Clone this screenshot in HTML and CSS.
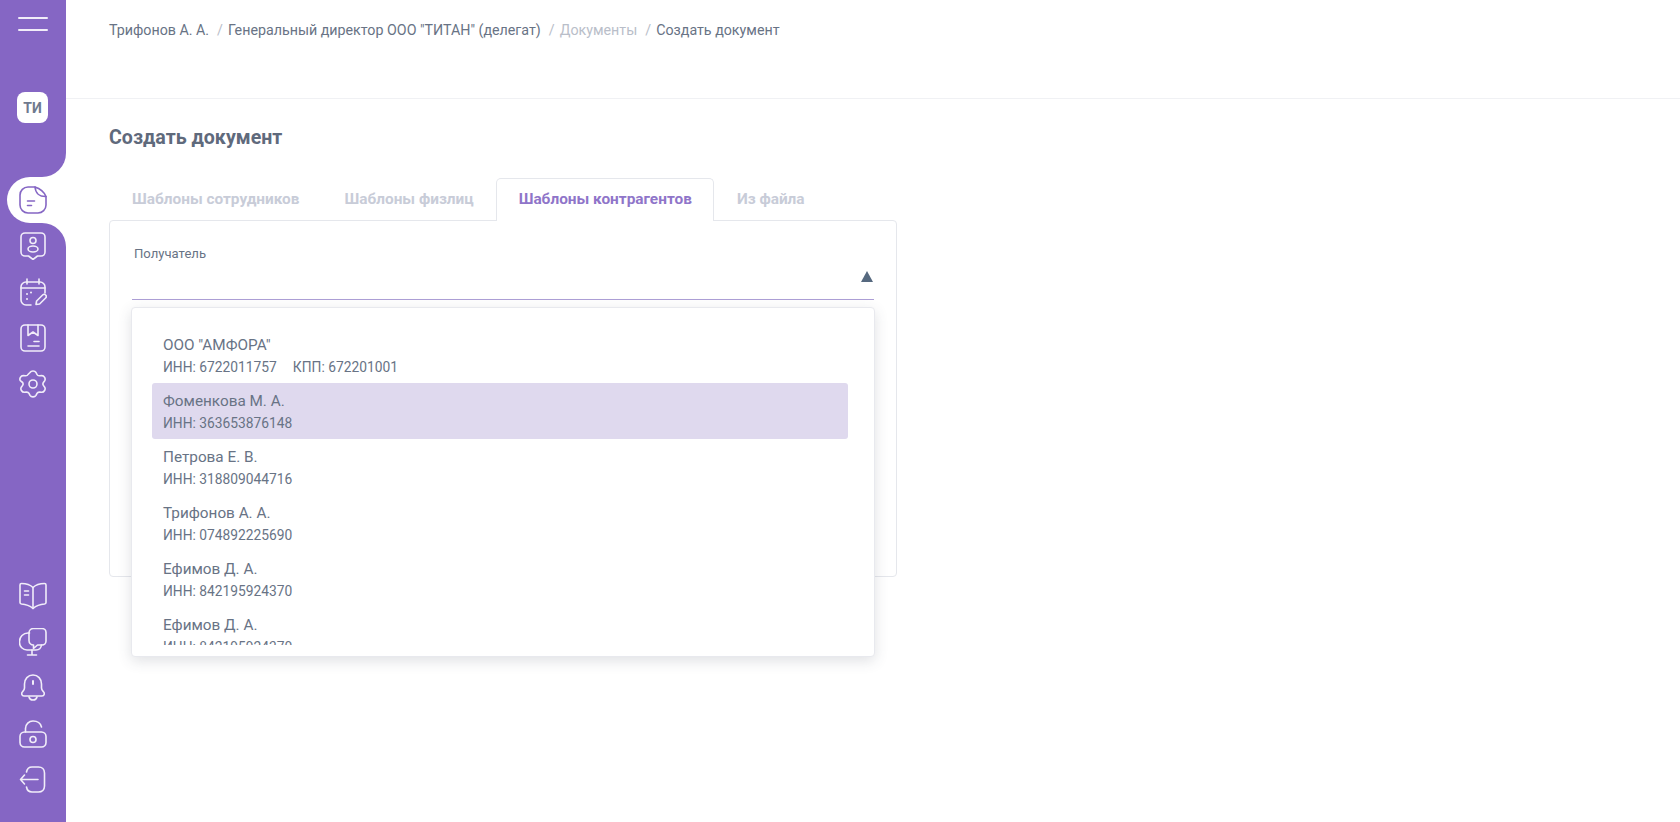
FILE: index.html
```html
<!DOCTYPE html>
<html lang="ru">
<head>
<meta charset="utf-8">
<title>Создать документ</title>
<link rel="stylesheet" href="styles.css">
</head>
<body>
<div class="app">
  <aside class="sidebar">
    <div class="side-top">
      <div class="burger"><span></span><span></span></div>
      <div class="avatar">ТИ</div>
    </div>
    <div class="side-active">
      <div class="pill">
        <svg class="ico ico-active" viewBox="0 0 28 28"><path d="M16 1H9a8 8 0 0 0-8 8v10a8 8 0 0 0 8 8h10a8 8 0 0 0 8-8v-8.500"/><path d="M16 1c.5 6 4.500 9.800 11 9.500C25 6 21 2.500 16 1z"/><path d="M8.500 15h7M8.500 19.500h4"/></svg>
      </div>
    </div>
    <div class="side-rest">
      <div class="icons">
        <svg class="ico" viewBox="0 0 28 28"><path d="M6 1h16a4 4 0 0 1 4 4v15a4 4 0 0 1-4 4h-3.500L14 27.500 9.500 24H6a4 4 0 0 1-4-4V5a4 4 0 0 1 4-4z"/><circle cx="14" cy="8.500" r="3"/><ellipse cx="14" cy="17" rx="5" ry="3"/></svg>
        <svg class="ico" viewBox="0 0 28 28"><path d="M12 27H7a5 5 0 0 1-5-5V9a5 5 0 0 1 5-5h14a5 5 0 0 1 5 5v6"/><path d="M8 1v5M20 1v5M2 10h24"/><path d="M8 16h.01M12 14.500h.01M8 21h.01" stroke-width="2"/><path d="M17 26.500l.6-3.500 6-6a2 2 0 0 1 3 3l-6 6z"/></svg>
        <svg class="ico" viewBox="0 0 28 28"><rect x="2" y="1" width="24" height="26" rx="4"/><path d="M9 1v10.500l5-3.500 5 3.500V1"/><path d="M9 22h11M15 17.500h5"/></svg>
        <svg class="ico" viewBox="0 0 28 28"><circle cx="14" cy="14" r="4"/><path d="M11 2.500c.6-1 1.600-1.500 3-1.500s2.400.5 3 1.500l1 2c.5 1 1.600 1.400 2.600 1.300l2.200-.2c1.200 0 2.100.6 2.800 1.800.7 1.200.7 2.300.1 3.300l-1.300 1.800c-.6.900-.6 2 0 2.900l1.300 1.800c.6 1 .6 2.100-.1 3.300-.7 1.200-1.600 1.800-2.800 1.800l-2.200-.2c-1-.1-2.100.3-2.600 1.300l-1 2c-.6 1-1.600 1.500-3 1.500s-2.400-.5-3-1.500l-1-2c-.5-1-1.600-1.400-2.600-1.300l-2.200.2c-1.200 0-2.100-.6-2.800-1.800-.7-1.200-.7-2.300-.1-3.300l1.300-1.800c.6-.9.6-2 0-2.900L1.300 10.700c-.6-1-.6-2.100.1-3.300C2.100 6.200 3 5.600 4.200 5.600l2.200.2c1 .1 2.100-.3 2.600-1.300z"/></svg>
      </div>
      <div class="icons">
        <svg class="ico" viewBox="0 0 28 28"><path d="M14 5.500C11 2.500 6.500 1.500 2.500 1.500 1.700 1.500 1 2.200 1 3v17.500c0 .8.700 1.400 1.500 1.500 4 .3 8 1.500 11.500 4.500 3.500-3 7.500-4.200 11.500-4.500.8-.1 1.500-.7 1.500-1.500V3c0-.8-.7-1.500-1.500-1.500-4 0-8.500 1-11.500 4z"/><path d="M14 5.500v21M5.500 9h4M5.500 13h4"/></svg>
        <svg class="ico" viewBox="0 0 28 28"><path d="M10.500 5H9a8.500 8.500 0 0 0-8.500 8.500v1a7.500 7.500 0 0 0 7.500 7.500h9c3 0 5-1.500 5.500-5"/><path d="M13 22v5M8.500 27h9"/><path d="M14.500 .5H23a4 4 0 0 1 4 4V13a4 4 0 0 1-4 4h-4.500l-4 3.500V17a4.500 4.500 0 0 1-4.500-4.500V5a4.500 4.500 0 0 1 4.500-4.500z"/></svg>
        <svg class="ico" viewBox="0 0 28 28"><path d="M14 1c-5 0-8.500 4-8.500 9v4c0 1.500-.8 2.700-2 3.800-1.500 1.500-.8 4.200 1.500 4.200h18c2.300 0 3-2.700 1.500-4.200-1.200-1.100-2-2.300-2-3.800v-4c0-5-3.500-9-8.500-9z"/><path d="M10 23c.5 2 2 3 4 3s3.500-1 4-3"/><path d="M14 7v3" stroke-width="2"/></svg>
        <svg class="ico" viewBox="0 0 28 28"><rect x="1" y="12" width="26" height="15" rx="4.500"/><circle cx="14" cy="19.500" r="3"/><path d="M6.500 12V8.500C6.500 4 10 1 14 1c4 0 7.500 2 8.500 6"/></svg>
        <svg class="ico" viewBox="0 0 28 28"><path d="M7.500 6c.5-3 2.500-5 5.500-5h6.500c3.500 0 6 2.500 6 6v13c0 3.500-2.500 6-6 6H13c-3 0-5-2-5.500-5"/><path d="M19 13.500H1.500M5.500 9L1.500 13.500 5.500 18"/></svg>
      </div>
    </div>
  </aside>

  <main class="main">
    <header class="topbar">
      <nav class="crumbs">
        <span class="crumb">Трифонов А. А.</span><span class="sep">/</span>
        <span class="crumb">Генеральный директор ООО "ТИТАН" (делегат)</span><span class="sep">/</span>
        <span class="crumb crumb-muted">Документы</span><span class="sep">/</span>
        <span class="crumb">Создать документ</span>
      </nav>
    </header>
    <section class="content">
      <h1 class="title">Создать документ</h1>
      <div class="tabs">
        <div class="tab">Шаблоны сотрудников</div>
        <div class="tab">Шаблоны физлиц</div>
        <div class="tab tab-active">Шаблоны контрагентов</div>
        <div class="tab">Из файла</div>
      </div>
      <div class="card">
        <div class="field">
          <div class="field-label">Получатель</div>
          <div class="field-input"><span class="arrow"></span></div>
          <div class="dropdown">
            <div class="list">
              <div class="item"><div class="item-name">ООО "АМФОРА"</div><div class="item-sub"><span>ИНН: 6722011757</span><span>КПП: 672201001</span></div></div>
              <div class="item item-selected"><div class="item-name">Фоменкова М. А.</div><div class="item-sub"><span>ИНН: 363653876148</span></div></div>
              <div class="item"><div class="item-name">Петрова Е. В.</div><div class="item-sub"><span>ИНН: 318809044716</span></div></div>
              <div class="item"><div class="item-name">Трифонов А. А.</div><div class="item-sub"><span>ИНН: 074892225690</span></div></div>
              <div class="item"><div class="item-name">Ефимов Д. А.</div><div class="item-sub"><span>ИНН: 842195924370</span></div></div>
              <div class="item"><div class="item-name">Ефимов Д. А.</div><div class="item-sub"><span>ИНН: 842195924370</span></div></div>
            </div>
          </div>
        </div>
      </div>
    </section>
  </main>
</div>
</body>
</html>
```
FILE: styles.css
```css
* { box-sizing: border-box; }
html, body { margin: 0; height: 100%; overflow: hidden; background: #fff; }
body { font-family: Roboto, "Liberation Sans", sans-serif; color: #687385; }
.app { display: flex; height: 822px; }

.sidebar { width: 66px; flex: none; display: flex; flex-direction: column; }
.side-top { height: 177px; background: #8566c4; border-bottom-right-radius: 24px; padding: 17px 0 0 17px; }
.burger { height: 14px; margin-left: 1px; display: flex; flex-direction: column; justify-content: space-between; }
.burger span { display: block; height: 2px; width: 30px; background: #f1edf9; border-radius: 1px; }
.avatar { margin-top: 61px; width: 31px; height: 31px; border-radius: 8px; background: #fff; color: #6f7a8e; font-size: 14px; font-weight: 700; display: flex; align-items: center; justify-content: center; }
.side-active { height: 46px; background: #8566c4; }
.pill { height: 46px; margin-left: 7px; background: #fff; border-radius: 23px 0 0 23px; padding: 9px 0 0 12px; }
.side-rest { flex: 1; background: #8566c4; border-top-right-radius: 24px; padding: 9px 0 28px 19px; display: flex; flex-direction: column; justify-content: space-between; }
.icons { display: flex; flex-direction: column; gap: 18px; }
.ico { width: 28px; height: 28px; display: block; fill: none; stroke: #f1edf9; stroke-width: 1.600; stroke-linecap: round; stroke-linejoin: round; }
.ico-active { stroke: #8566c4; }

.main { flex: 1; min-width: 0; }
.topbar { height: 99px; border-bottom: 1px solid #f0f1f4; padding: 22px 43px 0; }
.crumbs { display: flex; font-size: 14.250px; line-height: 17px; color: #687385; white-space: nowrap; }
.crumb-muted { color: #b9bec9; }
.sep { color: #b9bec9; margin: 0 5px 0 8px; }
.content { padding: 0 43px; }
.title { margin: 27px 0 0; font-size: 19.600px; line-height: 24px; font-weight: 700; color: #5f6a7c; }
.tabs { display: flex; margin-top: 28px; padding-left: .5px; position: relative; z-index: 1; }
.tab { height: 43px; padding: 0 21.500px; font-size: 15.400px; font-weight: 700; line-height: 40px; color: #c8ccd8; border: 1px solid transparent; border-bottom: 0; }
.tab-active { color: #8f75c9; background: #fff; border-color: #e5e7ec; border-radius: 5px 5px 0 0; }
.card { width: 788px; height: 357px; margin-top: -1px; border: 1px solid #e5e7ec; border-radius: 4px; padding: 22px 22px 0; background: #fff; }
.field { position: relative; }
.field-label { font-size: 13.100px; line-height: 18px; padding: 2px 0 0 2px; height: 20px; color: #687385; }
.field-input { height: 37px; border-bottom: 1px solid #ad9fd6; position: relative; }
.arrow { position: absolute; right: 1px; top: 8px; width: 0; height: 0; border-left: 6px solid transparent; border-right: 6px solid transparent; border-bottom: 11px solid #56697f; }
.dropdown { position: absolute; left: -1px; top: 64px; width: 744px; height: 350px; background: #fff; border: 1px solid #e8e9ee; border-radius: 4px; box-shadow: 0 4px 14px rgba(60, 70, 90, .16); padding: 19px 26px 0 20px; z-index: 2; }
.list { height: 318px; overflow: hidden; }
.item { height: 56px; padding: 8px 11px 0; border-radius: 3px; color: #687385; }
.item-selected { background: #dfd9ee; }
.item-name { font-size: 15.300px; line-height: 20px; }
.item-sub { font-size: 13.800px; line-height: 18px; margin-top: 3px; display: flex; gap: 16px; }
```
